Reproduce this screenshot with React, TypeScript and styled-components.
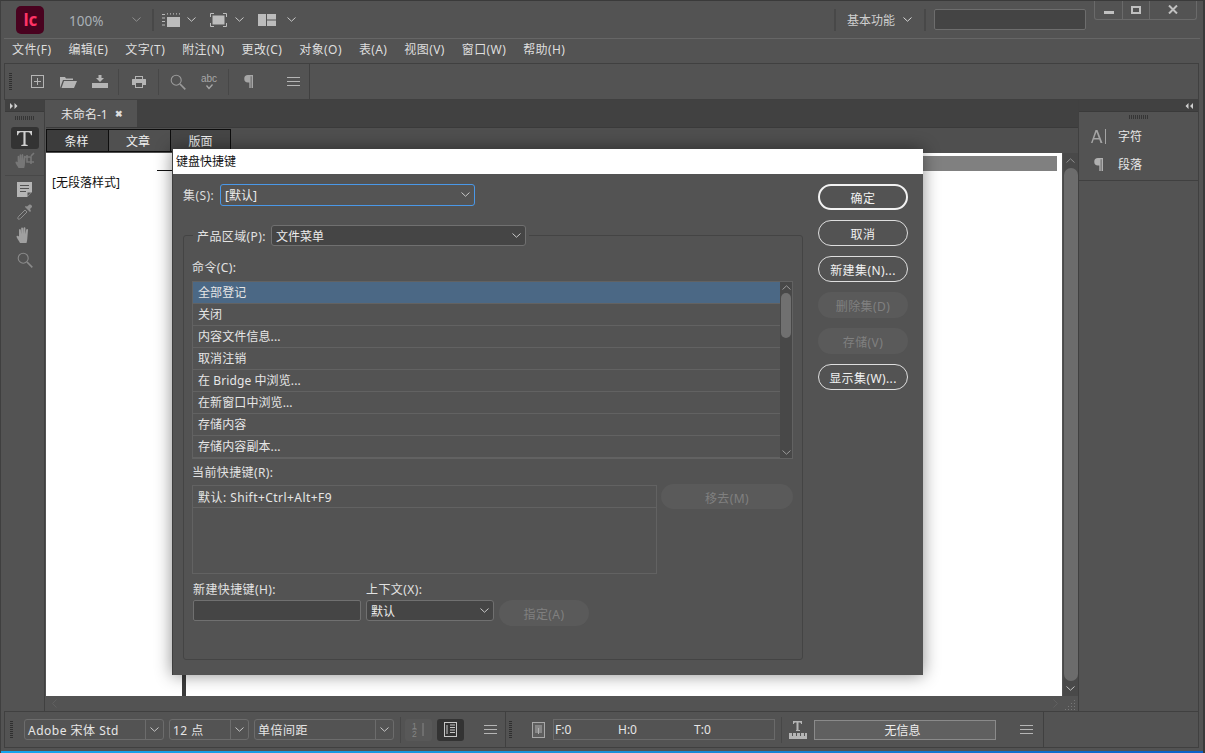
import React from "react";
import styled, { createGlobalStyle } from "styled-components";

const Global = createGlobalStyle`
  html, body { margin: 0; padding: 0; background: #535353; }
  * { box-sizing: border-box; }
  body { font-family: "Noto Sans", "Noto Sans CJK SC", sans-serif; font-size: 12px; color: #dcdcdc; }
`;

const Window = styled.div`
  position: relative; width: 1205px; height: 753px; overflow: hidden;
  display: flex; flex-direction: column; background: #535353;
  border-top: 1px solid #3a3a3a; border-left: 1px solid #3f3f3f; border-right: 2px solid #3a3a3a;
  padding: 0 3px 5px 3px;
  &::after {
    content: ""; position: absolute; left: 0; right: 0; bottom: 0; height: 2px;
    background: linear-gradient(to right, #14a4ee, #1a90d8 50%, #0a60c8);
  }
`;

const TitleBar = styled.header`
  height: 38px; display: flex; align-items: center; position: relative; flex: none;
  border-bottom: 1px solid #666;
`;
const Logo = styled.div`
  width: 28px; height: 28px; margin-left: 12px; border-radius: 5px; background: #49021f; color: #ff3366;
  display: flex; align-items: center; justify-content: center;
  font: 700 17px "Open Sans", sans-serif; letter-spacing: -0.5px;
`;
const Zoom = styled.span`
  width: 61px; margin: 2px 0 0 25px; font-size: 13.5px; color: #a9b0b6;
`;
const TopChevron = styled.span`
  display: flex; width: 12px; justify-content: center;
`;
const VRule = styled.span<{ $ml?: number; $mr?: number }>`
  width: 2px; height: 22px; background: #484848; flex: none;
  margin: 0 ${(p) => p.$mr ?? 9}px 0 ${(p) => p.$ml ?? 9}px;
`;
const TopIcon = styled.span<{ $w: number; $ml?: number }>`
  display: flex; justify-content: center; width: ${(p) => p.$w}px; margin-left: ${(p) => p.$ml ?? 0}px;
`;
const Spacer = styled.span`flex: 1;`;
const WorkspaceName = styled.span`
  width: 47px; color: #cfcfcf; margin: 0 5px 0 2px; white-space: nowrap;
`;
const SearchBox = styled.div`
  width: 152px; height: 21px; margin-right: 114px; background: #444; border: 1px solid #6d6d6d; border-radius: 2px;
`;
const WinButtons = styled.div`
  position: absolute; right: 3px; top: -1px; width: 103px; height: 20px; display: flex;
  border: 1px solid #6a6a6a; border-top: none; border-radius: 0 0 3px 3px;
`;
const WinButton = styled.div<{ $w: number }>`
  width: ${(p) => p.$w}px; display: flex; align-items: center; justify-content: center;
  border-right: 1px solid #6a6a6a; &:last-child { border-right: none; }
`;

const MenuBar = styled.nav`
  height: 24px; flex: none; display: flex; align-items: center; padding: 0 0 3px 8px; gap: 17px;
  color: #dedede; white-space: nowrap; line-height: 16px; letter-spacing: 0.4px;
`;

const ControlBar = styled.div`
  height: 37px; flex: none; display: flex; align-items: center; margin-right: 1px;
  border: 1px solid #404040;
`;
const Grip = styled.span<{ $ml?: number }>`
  width: 3px; height: 18px; flex: none; margin-left: ${(p) => p.$ml ?? 4}px;
  background: repeating-linear-gradient(to bottom, #2f2f2f 0 1px, transparent 1px 2px);
`;
const Slot = styled.span<{ $w: number; $ml?: number }>`
  width: ${(p) => p.$w}px; flex: none; display: flex; justify-content: center; align-items: center;
  margin-left: ${(p) => p.$ml ?? 0}px;
`;
const BarRule = styled.span<{ $ml?: number; $mr?: number }>`
  width: 1px; height: 26px; background: #474747; flex: none;
  margin: 0 ${(p) => p.$mr ?? 3}px 0 ${(p) => p.$ml ?? 3}px;
`;
const BarEnd = styled.span`
  width: 1px; align-self: stretch; background: #404040; flex: none;
`;

const Workspace = styled.main`
  flex: 1; min-height: 0; display: flex; margin-right: 1px;
`;
const ToolPanel = styled.aside`
  width: 40px; flex: none; margin: 0 1px 0 1px; display: flex; flex-direction: column; align-items: center;
  border-right: 1px solid #404040;
`;
const PanelHead = styled.div<{ $end?: boolean }>`
  height: 12px; width: 100%; flex: none; background: #414141; display: flex; align-items: center;
  justify-content: ${(p) => (p.$end ? "flex-end" : "flex-start")}; padding: 0 5px; border-bottom: 1px solid #3a3a3a;
`;
const HGrip = styled.span<{ $mt: number; $mb: number }>`
  width: 20px; height: 4px; flex: none; margin: ${(p) => p.$mt}px 0 ${(p) => p.$mb}px;
  background: repeating-linear-gradient(to right, #353535 0 1px, transparent 1px 2px);
`;
const ToolButton = styled.div<{ $on?: boolean; $h?: number; $mt?: number }>`
  width: 28px; height: ${(p) => p.$h ?? 24}px; flex: none; display: flex; align-items: center; justify-content: center;
  border-radius: 3px; background: ${(p) => (p.$on ? "#333" : "transparent")}; margin-top: ${(p) => p.$mt ?? 0}px;
`;
const ToolRule = styled.span`
  width: 100%; height: 1px; background: #484848; flex: none; margin: 3px 0 1px;
`;

const DocArea = styled.section`
  flex: 1; min-width: 0; display: flex; flex-direction: column; border-right: 1px solid #404040;
`;
const TabStrip = styled.div`
  height: 28px; flex: none; background: #414141; display: flex; border-bottom: 1px solid #3a3a3a;
`;
const DocTab = styled.div`
  width: 91px; background: #535353; display: flex; align-items: center; gap: 7px; padding-left: 15px;
  color: #e4e4e4; white-space: nowrap;
`;
const CloseMark = styled.span`font-size: 9px; font-weight: 700; color: #ddd; line-height: 1;`;
const ViewStrip = styled.div`
  height: 25px; flex: none; background: #4f4f4f; display: flex; align-items: flex-start; padding-top: 1px;
`;
const ViewTab = styled.div<{ $bg: string; $w: number; $pr?: number }>`
  width: ${(p) => p.$w}px; height: 23px; margin-right: -1px; display: flex; align-items: center; justify-content: center;
  padding-right: ${(p) => p.$pr ?? 0}px;
  border: 1px solid #0d0d0d; background: ${(p) => p.$bg}; color: #f0f0f0;
`;
const CanvasRow = styled.div`
  flex: 1; min-height: 0; display: flex;
`;
const Page = styled.div`
  position: relative; flex: 1; background: #fff; color: #111; padding: 21px 0 0 6px; line-height: 18px;
`;
const SpreadBar = styled.div`
  position: absolute; top: 3px; right: 5px; left: 300px; height: 15px; background: #808080;
`;
const GuideLine = styled.div`
  position: absolute; left: 111px; top: 17px; width: 20px; height: 1px; background: #111;
`;
const FrameLine = styled.div`
  position: absolute; left: 136px; bottom: 0; width: 4px; height: 30px; background: #3c3c3c;
`;
const VScroll = styled.div`
  width: 15px; flex: none; background: #494949; margin-left: 1px; display: flex; flex-direction: column; align-items: center;
`;
const ScrollEnd = styled.div`
  height: 15px; flex: none; display: flex; align-items: center; justify-content: center; width: 100%;
`;
const VThumb = styled.div`
  flex: 1; width: 14px; background: #6c6c6c; border-radius: 7px;
`;
const HScroll = styled.div`
  height: 15px; flex: none; display: flex; align-items: center; justify-content: space-between; padding: 0 3px 0 6px;
`;

const RightPanel = styled.aside`
  width: 120px; flex: none; display: flex; flex-direction: column; border-right: 1px solid #404040;
`;
const RightHeadGrip = styled.div`display: flex; justify-content: center;`;
const PanelEntry = styled.div`
  height: 28px; flex: none; display: flex; align-items: center; gap: 12px; padding-left: 12px; color: #e6e6e6;
`;
const PanelEntryIcon = styled.span`width: 15px; display: flex; justify-content: center;`;
const PanelEnd = styled.div`
  height: 3px; border-bottom: 1px solid #404040; flex: none;
`;

const StatusBar = styled.footer`
  height: 37px; flex: none; display: flex; align-items: center; border: 1px solid #404040; margin-right: 1px;
`;
const Combo = styled.div<{ $w: number; $ml: number }>`
  width: ${(p) => p.$w}px; height: 21px; flex: none; margin-left: ${(p) => p.$ml}px; display: flex; align-items: center;
  border: 1px solid #6c6c6c; border-radius: 3px; color: #e6e6e6; padding-left: 3px; white-space: nowrap; letter-spacing: 0.5px;
`;
const ComboText = styled.span`flex: 1; min-width: 0;`;
const ComboArrow = styled.span`
  width: 18px; align-self: stretch; display: flex; align-items: center; justify-content: center; border-left: 1px solid #6c6c6c;
`;
const ModeButton = styled.div<{ $on?: boolean; $ml: number }>`
  width: 27px; height: 22px; flex: none; margin-left: ${(p) => p.$ml}px; display: flex; align-items: center; justify-content: center;
  background: ${(p) => (p.$on ? "#333" : "#585858")}; border-radius: 3px;
`;
const DataBox = styled.div`
  width: 222px; height: 21px; flex: none; margin-left: 8px; border: 1px solid #6a6a6a; display: grid;
  grid-template-columns: 63px 76px 1fr; align-items: center; padding-left: 1px; color: #e6e6e6;
`;
const InfoBox = styled.div`
  width: 182px; height: 20px; flex: none; margin-left: 7px; background: #606060; border: 1px solid #8a8a8a;
  display: flex; align-items: center; justify-content: center; padding-right: 5px; color: #eee;
`;

const Dialog = styled.div`
  position: absolute; left: 171px; top: 148px; width: 751px; height: 526px; background: #535353;
  border-left: 1px solid #3e3e3e; box-shadow: 0 0 16px rgba(0,0,0,0.45); display: flex; flex-direction: column;
`;
const DialogTitle = styled.div`
  height: 25px; flex: none; background: #fff; color: #111; display: flex; align-items: center; padding: 0 0 2px 3px;
`;
const DialogBody = styled.div`
  flex: 1; min-height: 0; display: grid; grid-template-columns: 620px 90px; column-gap: 15px; padding: 10px 15px 15px 10px;
`;
const DialogMain = styled.div`display: flex; flex-direction: column; min-height: 0;`;
const SetRow = styled.div`display: flex; align-items: center; height: 22px; justify-content: space-between; width: 292px; letter-spacing: 0.4px;`;
const Select = styled.div<{ $w: number; $focus?: boolean; $h?: number; $dark?: boolean }>`
  width: ${(p) => p.$w}px; height: ${(p) => p.$h ?? 21}px; flex: none; display: flex; align-items: center; justify-content: space-between;
  padding: 0 4px; border-radius: 3px; color: #ececec; letter-spacing: 0;
  background: ${(p) => (p.$dark ? "#454545" : "#545454")};
  border: 1px solid ${(p) => (p.$focus ? "#4a98e8" : "#707070")};
`;
const Group = styled.fieldset`
  flex: 1; min-height: 0; margin: 19px 0 0; padding: 0 9px 0 8px; border: 1px solid #444; border-radius: 3px;
  display: flex; flex-direction: column;
`;
const GroupLegend = styled.legend`
  display: flex; align-items: center; justify-content: space-between; width: 336px; margin-left: 1px; padding: 0 3px 0 4px; height: 21px;
  color: #e2e2e2; letter-spacing: 0.4px;
`;
const FieldLabel = styled.div<{ $mt: number; $mb: number }>`
  height: 16px; line-height: 16px; flex: none; margin: ${(p) => p.$mt}px 0 ${(p) => p.$mb}px; color: #e2e2e2; letter-spacing: 0.4px;
`;
const CommandList = styled.div`
  height: 178px; flex: none; display: flex; border: 1px solid #626262;
`;
const Rows = styled.div`flex: 1; min-width: 0;`;
const Row = styled.div<{ $sel?: boolean }>`
  height: 22px; display: flex; align-items: center; padding: 0 0 1px 5px; color: #e6e6e6; letter-spacing: 0.1px;
  background: ${(p) => (p.$sel ? "#4b6885" : "transparent")}; border-bottom: 1px solid #626262;
`;
const ListScroll = styled.div`
  width: 12px; flex: none; background: #484848; display: flex; flex-direction: column; align-items: center; justify-content: flex-start;
`;
const ListScrollEnd = styled.div`height: 11px; flex: none; display: flex; align-items: center; justify-content: center;`;
const ListThumb = styled.div`width: 10px; height: 45px; flex: none; border-radius: 5px; background: #707070;`;
const ListGap = styled.div`flex: 1;`;
const ShortcutRow = styled.div`display: flex; gap: 4px; align-items: flex-start; flex: none;`;
const ShortcutBox = styled.div`width: 465px; height: 89px; flex: none; border: 1px solid #626262;`;
const ShortcutEntry = styled.div`
  height: 22px; display: flex; align-items: center; padding-left: 5px; border-bottom: 1px solid #626262; color: #e6e6e6; letter-spacing: 0.45px;
`;
const NewRow = styled.div`display: flex; gap: 5px; margin: 8px 0 0 1px; align-items: flex-start; flex: none;`;
const NewCol = styled.div`display: flex; flex-direction: column; gap: 2px;`;
const NewLabel = styled.div`height: 16px; line-height: 16px; color: #e2e2e2; white-space: nowrap; letter-spacing: 0.4px;`;
const TextInput = styled.div`
  width: 168px; height: 21px; background: #454545; border: 1px solid #707070; border-radius: 2px;
`;
const Button = styled.div<{ $primary?: boolean; $off?: boolean }>`
  width: 90px; height: 26px; flex: none; border-radius: 13px; display: flex; align-items: center; justify-content: center; white-space: nowrap;
  padding-top: 2px; letter-spacing: 0.4px;
  background: ${(p) => (p.$off ? "#5a5a5a" : "transparent")}; color: ${(p) => (p.$off ? "#808080" : "#f0f0f0")};
  border: ${(p) => (p.$off ? "none" : p.$primary ? "2px solid #f2f2f2" : "1px solid #dedede")};
`;
const RemoveButton = styled(Button)`width: 132px; height: 25px; margin-top: -1px;`;
const AssignButton = styled(Button)`margin-top: 18px;`;
const ButtonColumn = styled.div`display: flex; flex-direction: column; gap: 10px;`;

const Chev = ({ c = "#c8c8c8", w = 9, up = false }: { c?: string; w?: number; up?: boolean }) => (
  <svg width={w} height={w * 0.56} viewBox="0 0 9 5" fill="none">
    <path d={up ? "M.5 4.5 4.5.8l4 3.7" : "M.5.5l4 3.7 4-3.7"} stroke={c} strokeWidth="1" />
  </svg>
);
const Menu3 = ({ c = "#b5b5b5" }: { c?: string }) => (
  <svg width="13" height="9" viewBox="0 0 13 9"><path d="M0 .5h13M0 4.500h13M0 8.500h13" stroke={c} /></svg>
);
const HandShape = "M4 17c-1-2-3.500-5-3.500-6.500C.5 9.500 2 9.500 3 10.500V4c0-1.300 1.700-1.300 1.800 0l.4 4V2.500c0-1.300 1.800-1.300 1.900 0V8l.4-5.800c.1-1.300 1.900-1.200 1.900.1V8.300l.8-4.500c.2-1.200 1.900-1 1.800.3l-.6 7.400C11.200 14 11 15.500 10.500 17z";
const HandIcon = ({ c = "#8a8a8a" }: { c?: string }) => (
  <svg width="17" height="18" viewBox="0 0 17 18" fill={c}><path d={HandShape} /></svg>
);
const TouchIcon = ({ c = "#777" }: { c?: string }) => (
  <svg width="20" height="18" viewBox="0 0 20 18" fill="none">
    <path d={HandShape} fill={c} transform="translate(0 2) scale(.88)" />
    <path d="M12 4v7h7M9 6h7v7M19 2l-3 3" stroke={c} strokeWidth="1.600" />
  </svg>
);
const Magnifier = ({ c = "#9a9a9a" }: { c?: string }) => (
  <svg width="16" height="16" viewBox="0 0 16 16" fill="none">
    <circle cx="6.200" cy="6.200" r="5" stroke={c} strokeWidth="1.100" /><path d="M10 10l5.300 5.300" stroke={c} strokeWidth="1.700" />
  </svg>
);
const Pilcrow = ({ c = "#a6a6a6" }: { c?: string }) => (
  <svg width="9" height="13" viewBox="0 0 9 13" fill={c}>
    <path d="M4 0h5v13H7.500V1.200H6.700V13H5.300V7.500H4A3.750 3.750 0 0 1 4 0z" />
  </svg>
);
const Collapse = ({ flip = false }: { flip?: boolean }) => (
  <svg width="8" height="6" viewBox="0 0 8 6" fill="#cfcfcf" style={flip ? { transform: "scaleX(-1)" } : undefined}>
    <path d="M0 0l3 3-3 3zM4.500 0l3 3-3 3z" />
  </svg>
);

const rows = ["全部登记", "关闭", "内容文件信息...", "取消注销", "在 Bridge 中浏览...", "在新窗口中浏览...", "存储内容", "存储内容副本..."];
const menus = ["文件(F)", "编辑(E)", "文字(T)", "附注(N)", "更改(C)", "对象(O)", "表(A)", "视图(V)", "窗口(W)", "帮助(H)"];
const dots = [[29, 2], [29, 5], [26, 5], [29, 8], [26, 8], [23, 8], [29, 11], [26, 11], [23, 11], [20, 11]];

export default function App() {
  return (
    <Window>
      <Global />
      <TitleBar>
        <Logo>Ic</Logo>
        <Zoom>100%</Zoom>
        <TopChevron><Chev c="#8f8f8f" /></TopChevron>
        <VRule $ml={10} $mr={8} />
        <TopIcon $w={18}>
          <svg width="18" height="14" viewBox="0 0 18 14" fill="none">
            <path d="M0 1.500h3M0 5h3M0 8.500h3M0 12h3M5 .8h1M8 .8h1M11 .8h1M14 .8h1M17 .8h1" stroke="#b8b8b8" strokeWidth="1.200" />
            <rect x="5" y="4" width="13" height="10" fill="#bcbcbc" />
          </svg>
        </TopIcon>
        <TopIcon $w={10} $ml={6}><Chev /></TopIcon>
        <TopIcon $w={17} $ml={14}>
          <svg width="17" height="14" viewBox="0 0 17 14" fill="none">
            <rect x="2.500" y="2.500" width="12" height="9" fill="#bcbcbc" />
            <path d="M.5 4V.5H4M13 .5h3.500V4M.5 10v3.500H4M13 13.500h3.500V10" stroke="#bcbcbc" />
          </svg>
        </TopIcon>
        <TopIcon $w={10} $ml={7}><Chev /></TopIcon>
        <TopIcon $w={18} $ml={14}>
          <svg width="18" height="12" viewBox="0 0 18 12" fill="#bcbcbc">
            <rect width="8" height="12" /><rect x="9" width="9" height="5.500" /><rect x="9" y="6.500" width="9" height="5.500" />
          </svg>
        </TopIcon>
        <TopIcon $w={10} $ml={10}><Chev /></TopIcon>
        <Spacer />
        <VRule />
        <WorkspaceName>基本功能</WorkspaceName>
        <TopIcon $w={10} $ml={3}><Chev c="#d8d8d8" /></TopIcon>
        <VRule $ml={12} $mr={8} />
        <SearchBox />
        <WinButtons>
          <WinButton $w={28}><svg width="10" height="8" viewBox="0 0 10 8"><rect width="10" height="3" y="5" fill="#c0c0c0" /></svg></WinButton>
          <WinButton $w={27}><svg width="10" height="8" viewBox="0 0 10 8" fill="none"><rect x="1" y="1" width="8" height="6" stroke="#c0c0c0" strokeWidth="2" /></svg></WinButton>
          <WinButton $w={46}><svg width="10" height="9" viewBox="0 0 10 9"><path d="M1 .5l8 8M9 .5l-8 8" stroke="#c0c0c0" strokeWidth="2" /></svg></WinButton>
        </WinButtons>
      </TitleBar>

      <MenuBar>{menus.map((m) => <span key={m}>{m}</span>)}</MenuBar>

      <ControlBar>
        <Grip />
        <Slot $w={31} $ml={10}>
          <svg width="13" height="13" viewBox="0 0 13 13" fill="none"><rect x=".5" y=".5" width="12" height="12" stroke="#b5b5b5" /><path d="M6.500 3v7M3 6.500h7" stroke="#b5b5b5" /></svg>
        </Slot>
        <Slot $w={31}>
          <svg width="17" height="12" viewBox="0 0 17 12" fill="#b5b5b5"><path d="M0 12V1h5l1 1.500h7V4H3L0 12zM1.500 12L4 5h13l-3 7z" /></svg>
        </Slot>
        <Slot $w={31}>
          <svg width="16" height="13" viewBox="0 0 16 13" fill="#b5b5b5"><rect y="8" width="16" height="5" /><path d="M6.500 0h3v3H12L8 7 4 3h2.500z" /></svg>
        </Slot>
        <BarRule />
        <Slot $w={32} $ml={1}>
          <svg width="14" height="12" viewBox="0 0 14 12" fill="#b5b5b5"><path d="M3 0h8v3h2.500A.5.5 0 0 1 14 3.500V9h-3v3H3V9H0V3.500A.5.5 0 0 1 .5 3H3zM4 1v2h6V1zM4 7v4h6V7z" fillRule="evenodd" /></svg>
        </Slot>
        <BarRule />
        <Slot $w={32}><Magnifier /></Slot>
        <Slot $w={31}>
          <svg width="17" height="16" viewBox="0 0 17 16" fill="none"><text x="0" y="8" fontSize="10" fill="#a8a8a8" fontFamily="Liberation Sans">abc</text><path d="M5.500 11.500l2.500 3 3.500-4" stroke="#a8a8a8" strokeWidth="1.300" /></svg>
        </Slot>
        <BarRule />
        <Slot $w={32}><Pilcrow /></Slot>
        <Slot $w={32} $ml={13}><Menu3 /></Slot>
        <BarEnd />
      </ControlBar>

      <Workspace>
        <ToolPanel>
          <PanelHead><Collapse /></PanelHead>
          <HGrip $mt={4} $mb={7} />
          <ToolButton $on $h={22}>
            <svg width="15" height="15" viewBox="0 0 14 14" fill="#d0d0d0"><path d="M0 0h14v4h-1c-.2-1.500-1-2.800-2.500-2.800H8V12.500l2 .5v1H4v-1l2-.5V1.200H3.500C2 1.200 1.200 2.500 1 4H0z" /></svg>
          </ToolButton>
          <ToolButton $mt={-1}><TouchIcon /></ToolButton>
          <ToolRule />
          <ToolButton>
            <svg width="15" height="15" viewBox="0 0 15 15" fill="#b5b5b5"><path d="M0 0h15v10l-5 5H0zM3 3v1h9V3zm0 3v1h9V6zm0 3v1h6V9zM10.500 14v-3.500H14z" fillRule="evenodd" /></svg>
          </ToolButton>
          <ToolButton $mt={-1}>
            <svg width="16" height="16" viewBox="0 0 16 16" fill="none"><path d="M1 15c-.5-1 0-2 1-3l6-6 2 2-6 6c-1 1-2 1.500-3 1z" stroke="#8f8f8f" /><path d="M8 3l5 5 1-1-1-2 2-2c.5-1-1-3-2.500-2.500L10 2.500 8.500 2z" fill="#8f8f8f" /></svg>
          </ToolButton>
          <ToolButton $mt={-1}><HandIcon c="#a0a0a0" /></ToolButton>
          <ToolButton $mt={1}><Magnifier c="#8a8a8a" /></ToolButton>
        </ToolPanel>

        <DocArea>
          <TabStrip>
            <DocTab>未命名-1<CloseMark>✖</CloseMark></DocTab>
          </TabStrip>
          <ViewStrip>
            <ViewTab $w={63} $bg="#3c3c3c" $pr={2}>条样</ViewTab>
            <ViewTab $w={63} $bg="#505050" $pr={3}>文章</ViewTab>
            <ViewTab $w={61} $bg="#464646">版面</ViewTab>
          </ViewStrip>
          <CanvasRow>
            <Page>
              [无段落样式]
              <SpreadBar />
              <GuideLine />
              <FrameLine />
            </Page>
            <VScroll>
              <ScrollEnd><Chev c="#8e8e8e" up /></ScrollEnd>
              <VThumb />
              <ScrollEnd><Chev c="#c0c0c0" /></ScrollEnd>
            </VScroll>
          </CanvasRow>
          <HScroll>
            <svg width="5" height="9" viewBox="0 0 5 9" fill="none"><path d="M4.500.5l-4 4 4 4" stroke="#606060" /></svg>
            <svg width="30" height="12" viewBox="0 0 30 12" fill="#777">
              <path d="M8.500 1.500l4 4-4 4" stroke="#606060" fill="none" />
              {dots.map(([x, y]) => <rect key={`${x}-${y}`} x={x} y={y} width="1" height="1" />)}
            </svg>
          </HScroll>
        </DocArea>

        <RightPanel>
          <PanelHead $end><Collapse flip /></PanelHead>
          <RightHeadGrip><HGrip $mt={3} $mb={3} /></RightHeadGrip>
          <PanelEntry>
            <PanelEntryIcon>
              <svg width="15" height="15" viewBox="0 0 15 15" fill="#a4a4a4"><path d="M4.500 1h2L11.500 14H9.500l-1.200-3.500H2.700L1.500 14H0zM3.300 9h4.400L5.500 3z" fillRule="evenodd" /><rect x="14" width="1" height="15" /></svg>
            </PanelEntryIcon>
            字符
          </PanelEntry>
          <PanelEntry>
            <PanelEntryIcon><Pilcrow c="#b0b0b0" /></PanelEntryIcon>
            段落
          </PanelEntry>
          <PanelEnd />
        </RightPanel>
      </Workspace>

      <StatusBar>
        <Grip $ml={5} />
        <Combo $w={140} $ml={11}><ComboText>Adobe 宋体 Std</ComboText><ComboArrow><Chev /></ComboArrow></Combo>
        <Combo $w={80} $ml={5}><ComboText>12 点</ComboText><ComboArrow><Chev /></ComboArrow></Combo>
        <Combo $w={140} $ml={5}><ComboText>单倍间距</ComboText><ComboArrow><Chev /></ComboArrow></Combo>
        <BarRule $ml={6} $mr={4} />
        <ModeButton $ml={0}>
          <svg width="15" height="17" viewBox="0 0 15 17" fill="none"><text x="1" y="7.500" fontSize="8.500" fill="#858585" fontFamily="Liberation Sans">1</text><path d="M1 8.500h5" stroke="#6c6c6c" /><text x="1" y="16" fontSize="8.500" fill="#858585" fontFamily="Liberation Sans">2</text><path d="M12 2v13" stroke="#858585" /></svg>
        </ModeButton>
        <ModeButton $on $ml={5}>
          <svg width="13" height="15" viewBox="0 0 13 15" fill="none"><rect x=".5" y=".5" width="12" height="14" stroke="#c8c8c8" /><path d="M3 3v9M6 3h5M6 5.500h5M6 8h5M6 10.500h5" stroke="#c8c8c8" /></svg>
        </ModeButton>
        <Slot $w={13} $ml={20}><Menu3 /></Slot>
        <Slot $w={1} $ml={8}><BarEnd style={{ height: 36 }} /></Slot>
        <Grip $ml={3} />
        <Slot $w={14} $ml={19}>
          <svg width="13" height="16" viewBox="0 0 13 16" fill="none"><rect x=".5" y=".5" width="12" height="15" fill="#5e5e5e" stroke="#a8a8a8" /><path d="M3 4h7M3 6h7M3 8h7M3 10h7M6.500 6v6" stroke="#b0b0b0" /></svg>
        </Slot>
        <DataBox><span>F:0</span><span>H:0</span><span>T:0</span></DataBox>
        <BarRule $ml={6} />
        <Slot $w={18} $ml={4}>
          <svg width="18" height="18" viewBox="0 0 18 18" fill="#b5b5b5"><path d="M5 0h8v3h-1c0-1-.5-1.500-1.500-1.500h-1V9H11v1H7V9h.5V1.500h-1C5.500 1.500 5 2 5 3H4V0z" /><path d="M0 12h18v6H0zM3 12v3h1v-3zM7 12v3h1v-3zM11 12v3h1v-3zM15 12v3h1v-3z" fillRule="evenodd" /></svg>
        </Slot>
        <InfoBox>无信息</InfoBox>
        <Slot $w={13} $ml={24}><Menu3 /></Slot>
        <Slot $w={1} $ml={10}><BarEnd style={{ height: 36 }} /></Slot>
      </StatusBar>

      <Dialog>
        <DialogTitle>键盘快捷键</DialogTitle>
        <DialogBody>
          <DialogMain>
            <SetRow>
              <span>集(S):</span>
              <Select $w={255} $h={22} $focus>[默认]<Chev /></Select>
            </SetRow>
            <Group>
              <GroupLegend>
                产品区域(P):
                <Select $w={255} $dark>文件菜单<Chev /></Select>
              </GroupLegend>
              <FieldLabel $mt={14} $mb={5}>命令(C):</FieldLabel>
              <CommandList>
                <Rows>{rows.map((r, i) => <Row key={r} $sel={i === 0}>{r}</Row>)}</Rows>
                <ListScroll>
                  <ListScrollEnd><Chev c="#9a9a9a" up /></ListScrollEnd>
                  <ListThumb />
                  <ListGap />
                  <ListScrollEnd><Chev c="#9a9a9a" /></ListScrollEnd>
                </ListScroll>
              </CommandList>
              <FieldLabel $mt={6} $mb={4}>当前快捷键(R):</FieldLabel>
              <ShortcutRow>
                <ShortcutBox><ShortcutEntry>默认: Shift+Ctrl+Alt+F9</ShortcutEntry></ShortcutBox>
                <RemoveButton $off>移去(M)</RemoveButton>
              </ShortcutRow>
              <NewRow>
                <NewCol><NewLabel>新建快捷键(H):</NewLabel><TextInput /></NewCol>
                <NewCol><NewLabel>上下文(X):</NewLabel><Select $w={128} $dark>默认<Chev /></Select></NewCol>
                <AssignButton $off>指定(A)</AssignButton>
              </NewRow>
            </Group>
          </DialogMain>
          <ButtonColumn>
            <Button $primary>确定</Button>
            <Button>取消</Button>
            <Button>新建集(N)...</Button>
            <Button $off>删除集(D)</Button>
            <Button $off>存储(V)</Button>
            <Button>显示集(W)...</Button>
          </ButtonColumn>
        </DialogBody>
      </Dialog>
    </Window>
  );
}
